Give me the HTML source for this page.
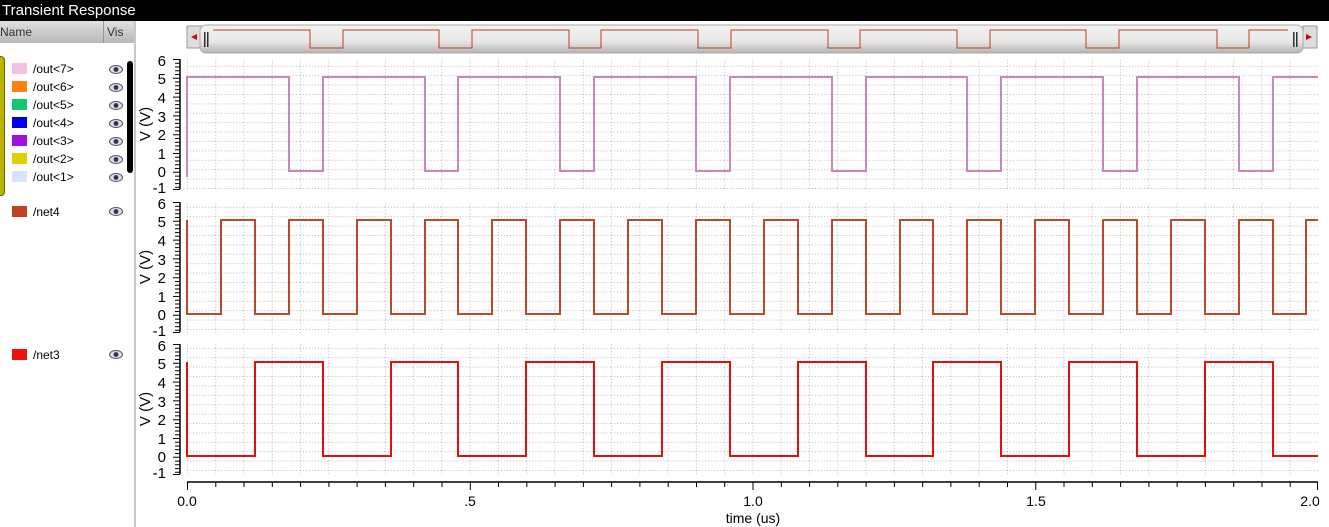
<!DOCTYPE html>
<html><head><meta charset="utf-8"><style>
body{margin:0;width:1329px;height:527px;overflow:hidden;background:#fff;font-family:"Liberation Sans",sans-serif;position:relative}
.title{position:absolute;left:0;top:0;width:1329px;height:21px;background:#000;color:#fff;font-size:15px;line-height:21px;padding-left:2px}
.left{position:absolute;left:0;top:21px;width:134px;height:506px;background:#fff;border-right:2px solid #c8c8c8}
.hdr{position:absolute;left:0;top:0;width:134px;height:22px;background:linear-gradient(#e0e0e0,#b8b8b8);font-size:12px;color:#333}
.row{position:absolute;left:0;font-size:12px;color:#000;height:16px;line-height:16px}
.sw{position:absolute;left:12px;top:2px;width:15px;height:11px}
.nm{position:absolute;left:33px}
.eye{position:absolute;left:109px;top:3px;width:14px;height:9px}
</style></head><body>
<div class="title">Transient Response</div>
<div class="left">
 <div class="hdr"><span style="position:absolute;left:0;top:4px">Name</span><span style="position:absolute;left:103px;top:0;height:22px;border-left:1px solid #999"></span><span style="position:absolute;left:107px;top:4px">Vis</span></div>
 <div style="position:absolute;left:-4px;top:35px;width:7px;height:138px;background:#b8b400;border:1px solid #6a6a00;border-radius:4px"></div>
 <div style="position:absolute;left:127px;top:40px;width:6px;height:112px;background:#000;border-radius:3px"></div>
</div>
<svg width="1329" height="527" style="position:absolute;left:0;top:0">
<defs>
<pattern id="g" x="187" y="0" width="28.275" height="9.4" patternUnits="userSpaceOnUse">
<line x1="0.5" y1="0" x2="0.5" y2="9.4" stroke="#bbb" stroke-width="1" stroke-dasharray="1 2"/>
<line x1="0" y1="0.5" x2="28.275" y2="0.5" stroke="#bbb" stroke-width="1" stroke-dasharray="1 2"/>
</pattern>
<symbol id="eye" viewBox="0 0 14 9"><ellipse cx="7" cy="4.5" rx="6.5" ry="4" fill="#dde" stroke="#556" stroke-width="1"/><circle cx="7" cy="4.5" r="2.4" fill="#334"/></symbol>
<linearGradient id="sb" x1="0" y1="0" x2="0" y2="1"><stop offset="0" stop-color="#f4f4f4"/><stop offset="0.6" stop-color="#e6e6e6"/><stop offset="1" stop-color="#b4b4b4"/></linearGradient>
</defs>
<!-- legend -->
<g font-size="12" font-family="Liberation Sans">
<g id="leg">
<rect x="12" y="63" width="15" height="11" fill="#f6c0e6"/><text x="33" y="73">/out&lt;7&gt;</text>
<rect x="12" y="81" width="15" height="11" fill="#ff8010"/><text x="33" y="91">/out&lt;6&gt;</text>
<rect x="12" y="99" width="15" height="11" fill="#10c870"/><text x="33" y="109">/out&lt;5&gt;</text>
<rect x="12" y="117" width="15" height="11" fill="#0000f0"/><text x="33" y="127">/out&lt;4&gt;</text>
<rect x="12" y="135" width="15" height="11" fill="#a010e0"/><text x="33" y="145">/out&lt;3&gt;</text>
<rect x="12" y="153" width="15" height="11" fill="#e0d000"/><text x="33" y="163">/out&lt;2&gt;</text>
<rect x="12" y="171" width="15" height="11" fill="#d8e4fc"/><text x="33" y="181">/out&lt;1&gt;</text>
<rect x="12" y="206" width="15" height="11" fill="#c04020"/><text x="33" y="216">/net4</text>
<rect x="12" y="349" width="15" height="11" fill="#f01010"/><text x="33" y="359">/net3</text>
</g>
<use href="#eye" x="109" y="65" width="14" height="9"/><use href="#eye" x="109" y="83" width="14" height="9"/>
<use href="#eye" x="109" y="101" width="14" height="9"/><use href="#eye" x="109" y="119" width="14" height="9"/>
<use href="#eye" x="109" y="137" width="14" height="9"/><use href="#eye" x="109" y="155" width="14" height="9"/>
<use href="#eye" x="109" y="173" width="14" height="9"/><use href="#eye" x="109" y="207" width="14" height="9"/>
<use href="#eye" x="109" y="350" width="14" height="9"/>
</g>
<!-- scrollbar -->
<rect x="187" y="26" width="16" height="22" fill="#ddd" stroke="#999"/>
<polygon points="191,37 197,34 197,40" fill="#d00"/>
<rect x="1303" y="26" width="14" height="22" fill="#ddd" stroke="#999"/>
<polygon points="1312,37 1306,34 1306,40" fill="#d00"/>
<rect x="200" y="25" width="1103" height="28" rx="6" fill="url(#sb)" stroke="#aaa"/>
<rect x="204" y="32" width="1.5" height="15" fill="#333"/><rect x="207" y="32" width="1.5" height="15" fill="#333"/>
<rect x="1293" y="32" width="1.5" height="15" fill="#333"/><rect x="1296" y="32" width="1.5" height="15" fill="#333"/>
<polyline fill="none" stroke="#c04020" stroke-width="1" points="213,30 213,30 310,30 310,48 343,48 343,30 439,30 439,48 472,48 472,30 569,30 569,48 601,48 601,30 698,30 698,48 731,48 731,30 828,30 828,48 860,48 860,30 957,30 957,48 990,48 990,30 1086,30 1086,48 1119,48 1119,30 1217,30 1217,48 1249,48 1249,30 1288,30"/>
<!-- grids -->
<rect x="187" y="59" width="1131" height="131" fill="url(#g)"/>
<rect x="187" y="202" width="1131" height="131" fill="url(#g)"/>
<rect x="187" y="344" width="1131" height="131" fill="url(#g)"/>
<!-- y axes -->
<g stroke="#000" stroke-width="1.5">
<line x1="180" y1="59" x2="180" y2="189"/><line x1="180" y1="202" x2="180" y2="332"/><line x1="180" y1="344" x2="180" y2="474"/>
</g>
<g stroke="#000" stroke-width="1">
<path id="tk" d="M173,59.5h7M175,63.3h5M175,67h5M175,70.8h5M175,74.5h5M173,78.3h7M175,82h5M175,85.8h5M175,89.6h5M175,93.3h5M173,97.1h7M175,100.9h5M175,104.6h5M175,108.4h5M175,112.1h5M173,115.9h7M175,119.7h5M175,123.4h5M175,127.2h5M175,130.9h5M173,134.7h7M175,138.5h5M175,142.2h5M175,146h5M175,149.7h5M173,153.5h7M175,157.3h5M175,161h5M175,164.8h5M175,168.5h5M173,172.3h7M175,176.1h5M175,179.8h5M175,183.6h5M175,187.3h5M173,189.5h7"/>
<use href="#tk" y="143"/><use href="#tk" y="285"/>
</g>
<g font-size="15" text-anchor="end" font-family="Liberation Sans">
<text x="166" y="66">6</text><text x="166" y="84">5</text><text x="166" y="103">4</text><text x="166" y="122">3</text><text x="166" y="140">2</text><text x="166" y="159">1</text><text x="166" y="177">0</text><text x="166" y="193">-1</text>
<text x="166" y="209">6</text><text x="166" y="227">5</text><text x="166" y="246">4</text><text x="166" y="265">3</text><text x="166" y="283">2</text><text x="166" y="302">1</text><text x="166" y="320">0</text><text x="166" y="336">-1</text>
<text x="166" y="351">6</text><text x="166" y="369">5</text><text x="166" y="388">4</text><text x="166" y="407">3</text><text x="166" y="425">2</text><text x="166" y="444">1</text><text x="166" y="462">0</text><text x="166" y="478">-1</text>
<text transform="translate(150,124) rotate(-90)" text-anchor="middle">V (V)</text>
<text transform="translate(150,267) rotate(-90)" text-anchor="middle">V (V)</text>
<text transform="translate(150,409) rotate(-90)" text-anchor="middle">V (V)</text>
</g>
<!-- x axis -->
<line x1="187" y1="482" x2="1318" y2="482" stroke="#000" stroke-width="1.5"/>
<path stroke="#000" stroke-width="1" d="M187.5,482v8M215.8,482v5M244,482v5M272.3,482v5M300.6,482v5M328.9,482v5M357.1,482v5M385.4,482v5M413.7,482v5M442,482v5M470.3,482v8M498.5,482v5M526.8,482v5M555.1,482v5M583.4,482v5M611.6,482v5M639.9,482v5M668.2,482v5M696.5,482v5M724.7,482v5M753,482v8M781.3,482v5M809.6,482v5M837.8,482v5M866.1,482v5M894.4,482v5M922.7,482v5M950.9,482v5M979.2,482v5M1007.5,482v5M1035.8,482v8M1064,482v5M1092.3,482v5M1120.6,482v5M1148.9,482v5M1177.1,482v5M1205.4,482v5M1233.7,482v5M1262,482v5M1290.2,482v5M1317.5,482v8"/>
<g font-size="14" text-anchor="middle" font-family="Liberation Sans">
<text x="187" y="506">0.0</text><text x="470" y="506">.5</text><text x="753" y="506">1.0</text><text x="1036" y="506">1.5</text><text x="1310" y="506">2.0</text>
<text x="753" y="523">time (us)</text>
</g>
<!-- traces -->
<polyline fill="none" stroke="#c888bb" stroke-width="2" points="187,177 187,77 289,77 289,171 323,171 323,77 425,77 425,171 458,171 458,77 560,77 560,171 594,171 594,77 696,77 696,171 730,171 730,77 832,77 832,171 866,171 866,77 967,77 967,171 1001,171 1001,77 1103,77 1103,171 1137,171 1137,77 1239,77 1239,171 1273,171 1273,77 1318,77"/>
<polyline fill="none" stroke="#b84a30" stroke-width="2" points="187,220 187,314 221,314 221,220 255,220 255,314 289,314 289,220 323,220 323,314 357,314 357,220 391,220 391,314 425,314 425,220 458,220 458,314 492,314 492,220 526,220 526,314 560,314 560,220 594,220 594,314 628,314 628,220 662,220 662,314 696,314 696,220 730,220 730,314 764,314 764,220 798,220 798,314 832,314 832,220 866,220 866,314 900,314 900,220 933,220 933,314 967,314 967,220 1001,220 1001,314 1035,314 1035,220 1069,220 1069,314 1103,314 1103,220 1137,220 1137,314 1171,314 1171,220 1205,220 1205,314 1239,314 1239,220 1273,220 1273,314 1306,314 1306,220 1318,220"/>
<polyline fill="none" stroke="#e01010" stroke-width="2" points="187,362 187,456 255,456 255,362 323,362 323,456 391,456 391,362 458,362 458,456 526,456 526,362 594,362 594,456 662,456 662,362 730,362 730,456 798,456 798,362 866,362 866,456 933,456 933,362 1001,362 1001,456 1069,456 1069,362 1137,362 1137,456 1205,456 1205,362 1273,362 1273,456 1318,456"/>
</svg>
</body></html>
